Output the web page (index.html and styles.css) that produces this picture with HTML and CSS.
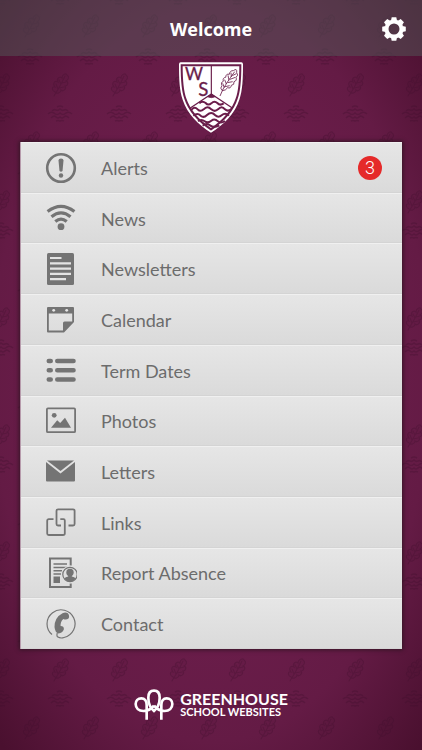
FILE: index.html
```html
<!DOCTYPE html>
<html lang="en">
<head>
<meta charset="utf-8">
<meta name="viewport" content="width=device-width, initial-scale=1">
<title>Welcome</title>
<link rel="stylesheet" href="styles.css">
</head>
<body>
<svg class="backdrop" aria-hidden="true">
  <defs>
    <g id="leaf" fill="#3d0c2a" fill-opacity=".15" stroke="#3d0c2a" stroke-width="1.2" stroke-linecap="round">
      <path d="M-6 11 C-3 6 1 0 5 -9 M-5 7 C-9 5 -8 1 -5 2 C-8 -2 -5 -5 -2 -3 C-4 -7 0 -9 2 -7 C2 -11 6 -12 7 -10 C10 -8 8 -5 6 -4 C9 -3 8 1 5 1 C7 4 3 7 1 5 C1 8 -3 9 -5 7 M-2 4 L-4 -1 M-1 3 L4 2 M1 -1 L-1 -5 M2 -2 L6 -3"/>
    </g>
    <g id="waves" fill="none" stroke="#3d0c2a" stroke-width="1.6">
      <path d="M-3 -7 Q0 -9 3 -7"/>
      <path d="M-8 -3 Q-6 -5 -4 -4 Q-2 -3 0 -5 Q2 -3 4 -4 Q6 -5 8 -3"/>
      <path d="M-12 0 Q-9 -3 -6 -1 Q-3 2 0 -1 Q3 2 6 -1 Q9 -3 12 0"/>
      <path d="M-9 4 Q-6 1 -4 3 Q-2 5 0 3 Q2 5 4 3 Q6 1 9 4"/>
      <path d="M-4 7 Q-2 6 0 7 Q2 6 4 7"/>
    </g>
    <pattern id="motif" x="30" y="56" width="59" height="117" patternUnits="userSpaceOnUse">
      <use href="#waves" x="0" y="1"/><use href="#waves" x="59" y="1"/>
      <use href="#leaf" x="30" y="29"/>
      <use href="#waves" x="30" y="58"/>
      <use href="#leaf" x="1" y="87"/><use href="#leaf" x="60" y="87"/>
      <use href="#waves" x="0" y="118"/><use href="#waves" x="59" y="118"/>
    </pattern>
  </defs>
  <rect width="100%" height="100%" fill="url(#motif)" opacity=".3"/>
</svg>

<header class="topbar">
  <h1 class="title">Welcome</h1>
  <button class="settings" type="button" aria-label="Settings">
    <svg width="24" height="24" viewBox="-12 -12 24 24" aria-hidden="true">
      <circle r="7.5" fill="none" stroke="#fff" stroke-width="4"/>
      <g fill="#fff">
        <path id="tooth" d="M-3 -8.500 L-2.300 -11.800 H2.300 L3 -8.500Z"/>
        <use href="#tooth" transform="rotate(45)"/><use href="#tooth" transform="rotate(90)"/>
        <use href="#tooth" transform="rotate(135)"/><use href="#tooth" transform="rotate(180)"/>
        <use href="#tooth" transform="rotate(225)"/><use href="#tooth" transform="rotate(270)"/>
        <use href="#tooth" transform="rotate(315)"/>
      </g>
    </svg>
  </button>
</header>

<div class="crest">
  <svg width="64" height="71" viewBox="27 20 192 213" role="img" aria-label="School crest">
    <path fill="#fff" d="M32 21 H214 Q219 21 219 27 C219 70 218 105 208 133 C194 177 160 208 123 232 C86 208 52 177 38 133 C28 105 27 70 27 27 Q27 21 32 21Z"/>
    <path fill="none" stroke="#6a1d4a" stroke-width="6" d="M35 30 H211 C211 70 210 104 200 130 C187 170 157 199 123 222 C89 199 59 170 46 130 C36 104 35 70 35 30Z"/>
    <g fill="none" stroke="#6a1d4a">
      <path stroke-width="3.500" d="M124 32 V118"/>
      <path stroke-width="4" d="M61 158 L124 116 L187 158"/>
      <path fill="#6a1d4a" stroke-width="2" d="M112 124 L124 117 L136 124 Q124 130 112 124Z"/>
      <g stroke-width="6">
        <path d="M88 144 Q97 135 107 143 Q115 152 124 144 Q133 135 142 143 Q150 152 161 144"/>
        <path d="M64 164 Q73 152 83 162 Q91 171 101 162 Q112 149 124 162 Q134 171 144 162 Q155 149 165 162 Q174 170 184 161"/>
        <path d="M70 181 Q82 171 92 181 Q101 189 111 179 Q124 167 135 179 Q145 189 155 180 Q166 170 177 181"/>
        <path d="M84 198 Q94 190 104 198 Q113 205 124 196 Q134 188 144 198 Q153 205 165 197"/>
        <path d="M98 211 Q109 202 120 210 Q132 219 148 210"/>
      </g>
      <g stroke-width="2.500">
        <path d="M150 122 Q158 100 171 82 Q181 67 194 49"/>
        <path d="M157 106 Q148 98 156 91 Q151 81 160 78 Q157 67 167 66 Q168 54 178 57 Q180 45 190 46 Q202 37 200 52 Q207 60 198 66 Q202 76 192 79 Q194 89 184 90 Q182 101 173 97 Q167 106 157 106Z"/>
        <path d="M163 97 L158 84 M169 86 L164 73 M177 75 L174 60 M184 65 L183 52 M165 94 L179 91 M172 82 L188 79 M180 72 L196 66 M187 61 L199 55"/>
      </g>
    </g>
    <text class="crest-letter" x="45" y="75" font-size="52">W</text>
    <text class="crest-letter" x="85" y="121" font-size="56">S</text>
  </svg>
</div>

<nav class="menu" aria-label="Main">
  <a class="item" href="#alerts">
    <svg class="icon" viewBox="0 0 32 32" aria-hidden="true"><circle cx="16" cy="16" r="13.800" fill="none" stroke="currentColor" stroke-width="2.600"/><path d="M13.500 8.500 Q13.500 6.500 16 6.500 T18.500 8.500 L17.500 19 Q16 20.500 14.500 19Z"/><circle cx="16" cy="23.500" r="2.200"/></svg>
    <span>Alerts</span><span class="badge">3</span>
  </a>
  <a class="item" href="#news">
    <svg class="icon" viewBox="0 0 32 32" aria-hidden="true"><g fill="none" stroke="currentColor" stroke-width="3.200"><path d="M2.600 8.500 Q16 -1.800 29.400 8.500"/><path d="M6.500 13.800 Q16 6 25.500 13.800"/><path d="M10.300 18.500 Q16 13.800 21.700 18.500"/></g><circle cx="16" cy="23.700" r="3.400"/></svg>
    <span>News</span>
  </a>
  <a class="item" href="#newsletters">
    <svg class="icon" viewBox="0 0 32 32" aria-hidden="true"><rect x="2" width="27" height="32" rx="1.500"/><path fill="none" stroke="#e3e3e3" stroke-width="2.200" d="M5 5 H16.500 M5 10.300 H26 M5 15.600 H26 M5 20.900 H26 M5 26.200 H21"/></svg>
    <span>Newsletters</span>
  </a>
  <a class="item" href="#calendar">
    <svg class="icon" viewBox="0 0 32 32" aria-hidden="true"><path fill-rule="evenodd" d="M3 3 H28 Q29 3 29 4 V18 L19 28.500 H3 Q2 28.500 2 27.500 V4 Q2 3 3 3Z M3.800 9.500 V26.500 H18 V19 Q18 17.500 19.500 17.500 H27.200 V9.500Z"/><g fill="#e6e6e6"><circle cx="8.700" cy="6.300" r="1.400"/><circle cx="21.700" cy="6.300" r="1.400"/></g></svg>
    <span>Calendar</span>
  </a>
  <a class="item" href="#term-dates">
    <svg class="icon" viewBox="0 0 32 32" aria-hidden="true"><path fill="none" stroke="currentColor" stroke-width="4.600" stroke-linecap="round" d="M3.800 6 H5.700 M12.300 6 H28.500 M3.800 15.300 H5.700 M12.300 15.300 H28.500 M3.800 24.500 H5.700 M12.300 24.500 H28.500"/></svg>
    <span>Term Dates</span>
  </a>
  <a class="item" href="#photos">
    <svg class="icon" viewBox="0 0 32 32" aria-hidden="true"><rect x="1.900" y="3.400" width="28.200" height="23.800" rx="1" fill="none" stroke="currentColor" stroke-width="1.800"/><circle cx="9.200" cy="10.300" r="2.400"/><path d="M6 22.700 L12.200 15.300 L15.200 18 L20 12.800 L26 22.700Z"/></svg>
    <span>Photos</span>
  </a>
  <a class="item" href="#letters">
    <svg class="icon" viewBox="0 0 32 32" aria-hidden="true"><path d="M2 4.500 H29 L15.500 15Z"/><path d="M1 6 L15.500 17.500 L30 6 V24.500 Q30 25.500 29 25.500 H2 Q1 25.500 1 24.500Z"/></svg>
    <span>Letters</span>
  </a>
  <a class="item" href="#links">
    <svg class="icon" viewBox="0 0 32 32" aria-hidden="true"><path fill="none" stroke="currentColor" stroke-width="1.800" d="M8.500 12.200 H3.800 Q2.200 12.200 2.200 13.700 V26.500 Q2.200 28 3.800 28 H18 Q19.800 28 19.800 26.500 V13.500 Q19.800 12.200 18.500 12.200 H15.300 M23.500 18.500 H28 Q29.600 18.500 29.600 17 V3.800 Q29.600 2.300 28 2.300 H13 Q11.500 2.300 11.500 3.800 V17 Q11.500 18.500 13 18.500 H16"/></svg>
    <span>Links</span>
  </a>
  <a class="item" href="#report-absence">
    <svg class="icon" viewBox="0 0 32 32" aria-hidden="true"><path fill="none" stroke="currentColor" stroke-width="2" d="M25.700 8.500 V1.500 H5 V30 H25.700 V26.500"/><path fill="none" stroke="currentColor" stroke-width="1.500" d="M8.500 7 H22 M8.500 10.500 H22 M8.500 13.800 H17 M8.500 17 H16"/><path d="M8.500 19.500 H15 V26 H8.500Z"/><circle cx="25" cy="17.500" r="8.800" fill="#e0e0e0"/><circle cx="25" cy="17.500" r="7.200" fill="none" stroke="currentColor" stroke-width="1.200"/><circle cx="25" cy="15.500" r="3.700"/><path d="M19.200 21.500 Q20.500 19.800 23.200 19.500 V17 H26.800 V19.500 Q29.500 19.800 30.800 21.500 Q28.800 24.500 25 24.500 T19.200 21.500Z"/></svg>
    <span>Report Absence</span>
  </a>
  <a class="item" href="#contact">
    <svg class="icon" viewBox="0 0 32 32" aria-hidden="true"><path fill="none" stroke="currentColor" stroke-width="1.200" d="M7 26.500 A14 14 0 1 1 19 29.500 Q15.500 30.800 12.500 28.800 Q11.500 27.500 12.300 25"/><path d="M17.500 5.300 Q20.500 3.600 22.800 5.300 Q25 8 23.500 10.500 Q21 12.500 18.300 10.900 Q15.200 14 15.600 18 Q19 18 18.900 21.300 Q17.500 25.300 13.500 25.500 Q10 24.500 9.500 19 Q9.500 9.500 17.500 5.300Z"/></svg>
    <span>Contact</span>
  </a>
</nav>

<footer class="brand">
  <svg width="40" height="31" viewBox="0 0 120 93" aria-hidden="true">
    <g fill="none" stroke="#fff" stroke-width="8">
      <path d="M60 66 C48 56 43 42 43 26 C43 12 50 5 60 5 C70 5 77 12 77 26 C77 42 72 56 60 66Z"/>
      <path d="M38 92 V48 C38 36 32 28 22 28 C12 28 5 36 5 45 C5 57 14 66 28 66 C44 66 52 60 60 50"/>
      <path d="M82 92 V48 C82 36 88 28 98 28 C108 28 115 36 115 45 C115 57 106 66 92 66 C76 66 68 60 60 50"/>
    </g>
  </svg>
  <p class="brand-name"><span class="brand-top">GREENHOUSE</span><span class="brand-sub">SCHOOL WEBSITES</span></p>
</footer>
</body>
</html>
```

FILE: styles.css
```css
* { box-sizing: border-box; }

body {
  margin: 0;
  min-height: 100vh;
  display: flex;
  flex-direction: column;
  position: relative;
  font-family: Lato, "Liberation Sans", sans-serif;
  background: radial-gradient(ellipse 72% 68% at center, #6a1d4a 50%, #641b45 72%, #4a102f 100%);
}

.backdrop {
  position: absolute;
  inset: 0;
  width: 100%;
  height: 100%;
  z-index: -1;
}

.topbar {
  height: 56px;
  padding: 1px 16px 0;
  display: grid;
  grid-template-columns: 1fr auto 1fr;
  align-items: center;
  background: rgba(81, 95, 90, .45);
}

.title {
  grid-column: 2;
  margin: 0;
  font: 700 18px/24px "Open Sans", "Noto Sans", sans-serif;
  color: #fff;
}

.settings {
  justify-self: end;
  width: 24px;
  height: 24px;
  padding: 0;
  border: 0;
  background: none;
  cursor: pointer;
}

.settings svg { display: block; }

.crest {
  height: 86px;
  padding-top: 6px;
  text-align: center;
}

.crest-letter {
  font-family: Lato, sans-serif;
  fill: #6a1d4a;
  stroke: #6a1d4a;
}

.menu {
  flex: 1;
  display: grid;
  grid-auto-rows: minmax(44px, 1fr);
  margin: 0 20px;
  border-left: 1px solid #b79bac;
  box-shadow: 0 0 4px 1px rgba(40, 20, 30, .8);
}

.item {
  display: flex;
  align-items: center;
  padding: 1px 20px 0 24px;
  border-top: 1px solid #f0f0f0;
  border-bottom: 1px solid #d4d4d4;
  background: linear-gradient(#e6e6e6, #dadada);
  color: #6c6c6c;
  font-size: 18px;
  line-height: 24px;
  text-decoration: none;
}

.icon {
  width: 32px;
  height: 32px;
  margin-right: 24px;
  fill: currentColor;
  color: #747474;
}

.badge {
  width: 24px;
  height: 24px;
  margin-left: auto;
  border-radius: 50%;
  background: #e52a2a;
  color: #fff;
  font: 300 18px/24px Roboto, sans-serif;
  text-align: center;
}

.brand {
  height: 101px;
  padding-top: 10px;
  display: flex;
  align-items: center;
  justify-content: center;
  gap: 6px;
  color: #fff;
}

.brand-name {
  margin: 0;
  display: flex;
  flex-direction: column;
  font-weight: 700;
}

.brand-top {
  font-size: 16px;
  line-height: 14px;
}

.brand-sub {
  font-size: 11px;
  line-height: 12px;
}
```
